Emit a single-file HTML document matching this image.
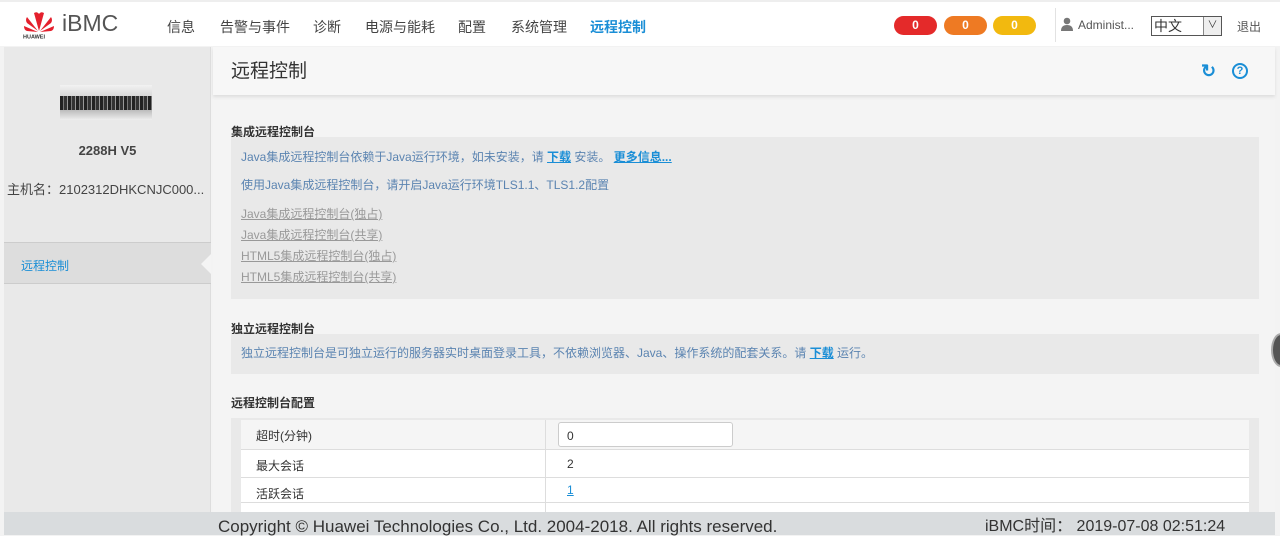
<!DOCTYPE html>
<html><head><meta charset="utf-8"><style>
*{margin:0;padding:0;box-sizing:border-box}
body{width:1280px;height:535px;overflow:hidden;background:#f3f3f3;font-family:"Liberation Sans","Noto Sans CJK SC",sans-serif;position:relative;font-size:12px;color:#333}
.hdr{position:absolute;left:0;top:0;width:1280px;height:46px;background:#fff;border-top:2px solid #eee}
.nav{position:absolute;top:15px;font-size:14px;color:#444}
.side{position:absolute;left:4px;top:47px;width:207px;height:466px;background:#e9e9e9;border-right:1px solid #ddd}
.main{position:absolute;left:213px;top:47px;width:1062px;height:466px;background:#f4f4f4}
.title{position:absolute;left:213px;top:47px;width:1062px;height:48px;background:#f7f7f7;box-shadow:0 2px 3px #ddd}
.sec{position:absolute;left:231px;font-size:12px;font-weight:bold;color:#333}
.box{position:absolute;left:231px;width:1028px;background:#e9e9e9}
.t{position:absolute;left:241px;font-size:12px}
.blue{color:#5b84b1}
.lnk{color:#999;text-decoration:underline}
.row{position:absolute;left:241px;width:1008px;border-bottom:1px solid #ddd;background:#fff}
.row span{position:absolute;left:15px;top:7px}
.row b{position:absolute;left:304px;top:0;bottom:0;border-left:1px solid #ddd}
.row i{position:absolute;left:326px;top:7px;font-style:normal}
.foot{position:absolute;left:4px;top:512px;width:1271px;height:23px;background:#d9dcde;font-size:17px;color:#333;line-height:18px}
.badge{position:absolute;top:14px;width:43px;height:19px;border-radius:10px;color:#fff;font-weight:bold;text-align:center;font-size:12px;line-height:19px}
</style></head><body>
<div class="hdr">
 <svg style="position:absolute;left:22px;top:7px" width="34" height="30" viewBox="0 0 34 30">
  <g fill="#e4202d"><path d="M17 22 L12 4 Q15 2 17 5Z"/><path d="M17 22 L22 4 Q19 2 17 5Z"/><path d="M16 22 L5 8 Q3 11 5 14Z"/><path d="M18 22 L29 8 Q31 11 29 14Z"/><path d="M16 23 L2 17 Q2 21 5 22Z"/><path d="M18 23 L32 17 Q32 21 29 22Z"/></g>
  <text x="1" y="29.5" font-size="5.5" font-weight="bold" fill="#333" font-family="Liberation Sans">HUAWEI</text></svg>
 <div style="position:absolute;left:62px;top:8px;font-size:23px;color:#555">iBMC</div>
 <div class="nav" style="left:167px">信息</div>
 <div class="nav" style="left:220px">告警与事件</div>
 <div class="nav" style="left:313px">诊断</div>
 <div class="nav" style="left:365px">电源与能耗</div>
 <div class="nav" style="left:458px">配置</div>
 <div class="nav" style="left:511px">系统管理</div>
 <div class="nav" style="left:590px;color:#1a8ed6;font-weight:bold">远程控制</div>
 <div class="badge" style="left:894px;background:#e42a2a">0</div>
 <div class="badge" style="left:944px;background:#ee7a23">0</div>
 <div class="badge" style="left:993px;background:#f2b90f">0</div>
 <div style="position:absolute;left:1055px;top:6px;height:34px;border-left:1px solid #e2e2e2"></div>
 <svg style="position:absolute;left:1061px;top:15px" width="12" height="14" viewBox="0 0 12 14"><circle cx="6" cy="4" r="3.3" fill="#777"/><path d="M0 14 Q0 8 6 8 Q12 8 12 14Z" fill="#777"/></svg>
 <div style="position:absolute;left:1078px;top:16px;font-size:12px;color:#555">Administ...</div>
 <div style="position:absolute;left:1151px;top:14px;width:71px;height:20px;border:1px solid #555;background:#fff;font-size:14px;line-height:18px;padding-left:2px">中文<span style="position:absolute;right:0;top:0;width:18px;height:18px;border-left:1px solid #888;background:#eee;text-align:center;font-size:10px">&#x2228;</span></div>
 <div style="position:absolute;left:1237px;top:16px;font-size:12px;color:#555">退出</div>
</div>
<div class="side">
 <div style="position:absolute;left:56px;top:38px;width:92px;height:11px;background:linear-gradient(#f2f2f2,#d8d8d8)"></div>
 <div style="position:absolute;left:56px;top:49px;width:92px;height:14px;background:repeating-linear-gradient(90deg,#222 0 3px,#777 3px 4px,#333 4px 7px,#999 7px 8px)"></div>
 <div style="position:absolute;left:56px;top:63px;width:92px;height:10px;background:linear-gradient(#bbb,#eee)"></div>
 <div style="position:absolute;left:0;width:207px;top:96px;text-align:center;font-weight:bold;color:#444;font-size:13px">2288H V5</div>
 <div style="position:absolute;left:3px;top:132px;font-size:13px;color:#444">主机名：2102312DHKCNJC000...</div>
 <div style="position:absolute;left:0;top:195px;width:207px;height:42px;background:#ddd;border-top:1px solid #ccc;border-bottom:1px solid #ccc"></div>
 <div style="position:absolute;left:17px;top:210px;font-size:12px;color:#1a8ed6">远程控制</div>
 <div style="position:absolute;left:197px;top:207px;width:0;height:0;border-top:10px solid transparent;border-bottom:10px solid transparent;border-right:10px solid #f4f4f4"></div>
</div>
<div class="main"></div>
<div class="title"><div style="position:absolute;left:18px;top:9px;font-size:19px;color:#333">远程控制</div>
 <div style="position:absolute;left:988px;top:14px;font-size:18px;color:#1a8ed6;font-weight:bold">&#x21bb;</div>
 <div style="position:absolute;left:1019px;top:16px;width:16px;height:16px;border:2px solid #1a8ed6;border-radius:50%;color:#1a8ed6;font-size:11px;font-weight:bold;text-align:center;line-height:12px">?</div>
</div>
<div class="sec" style="top:123px">集成远程控制台</div>
<div class="box" style="top:137px;height:162px"></div>
<div class="t blue" style="top:148px">Java集成远程控制台依赖于Java运行环境，如未安装，请 <u style="color:#1a8ed6;font-weight:bold">下载</u> 安装。 <u style="color:#1a8ed6;font-weight:bold">更多信息...</u></div>
<div class="t blue" style="top:176px">使用Java集成远程控制台，请开启Java运行环境TLS1.1、TLS1.2配置</div>
<div class="t lnk" style="top:205px">Java集成远程控制台(独占)</div>
<div class="t lnk" style="top:226px">Java集成远程控制台(共享)</div>
<div class="t lnk" style="top:247px">HTML5集成远程控制台(独占)</div>
<div class="t lnk" style="top:268px">HTML5集成远程控制台(共享)</div>
<div class="sec" style="top:320px">独立远程控制台</div>
<div class="box" style="top:334px;height:40px"></div>
<div class="t blue" style="top:344px">独立远程控制台是可独立运行的服务器实时桌面登录工具，不依赖浏览器、Java、操作系统的配套关系。请 <u style="color:#1a8ed6;font-weight:bold">下载</u> 运行。</div>
<div class="sec" style="top:394px">远程控制台配置</div>
<div class="box" style="top:418px;height:100px"></div>
<div class="row" style="top:420px;height:30px;background:#f5f5f5"><span>超时(分钟)</span><b></b><div style="position:absolute;left:317px;top:2px;width:175px;height:25px;border:1px solid #ccc;border-radius:3px;background:#fff;padding:6px 8px">0</div></div>
<div class="row" style="top:450px;height:28px"><span>最大会话</span><b></b><i>2</i></div>
<div class="row" style="top:478px;height:25px"><span>活跃会话</span><b></b><i style="color:#1a8ed6;text-decoration:underline;top:5px">1</i></div>
<div class="row" style="top:503px;height:12px"><span>通信加密</span><b></b></div>
<div class="foot"><div style="position:absolute;left:214px;top:6px;white-space:nowrap">Copyright © Huawei Technologies Co., Ltd. 2004-2018. All rights reserved.</div><div style="position:absolute;left:981px;top:6px;font-size:16px;white-space:nowrap">iBMC时间： 2019-07-08 02:51:24</div></div>
<div style="position:absolute;left:1271px;top:333px;width:20px;height:34px;border-radius:50%;background:#555;border:2px solid #aaa"></div>
</body></html>
